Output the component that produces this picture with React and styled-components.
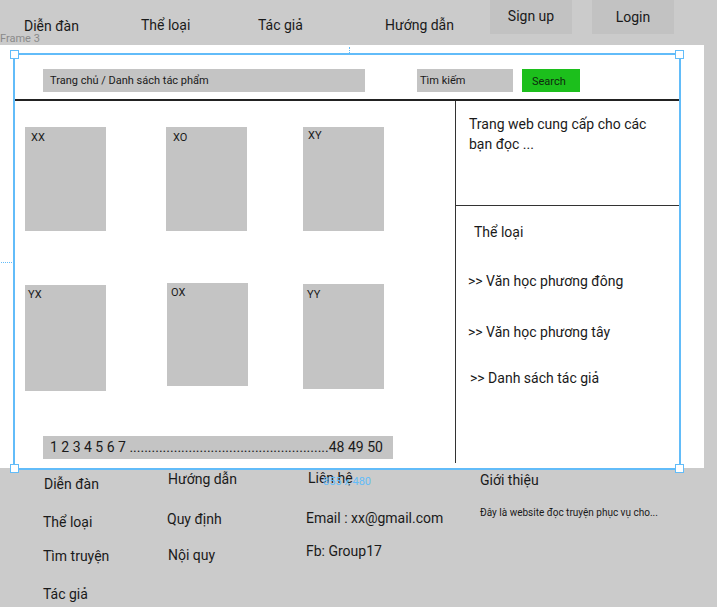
import React from 'react';
import styled, { createGlobalStyle } from 'styled-components';

const GlobalStyle = createGlobalStyle`
    html, body {
        margin: 0;
        padding: 0;
        background: #cbcbcb;
        font-family: Roboto, "Noto Sans", sans-serif;
        color: #1a1a1a;
    }
`;

const Page = styled.div`
    width: 717px;
    height: 607px;
    overflow: hidden;
    position: relative;
`;

// Header
const Header = styled.div`
    height: 45px;
    display: grid;
    grid-template-columns: 117px 117px 127px 105px 102px 82px;
    padding-left: 24px;
    position: relative;
`;

const NavLink = styled.div`
    font-size: 14px;
    line-height: 20px;
    padding-top: ${(p) => p.$top || 15}px;
    white-space: nowrap;
`;

const NavButton = styled.div`
    width: 82px;
    height: 34px;
    background: #c2c2c2;
    font-size: 14px;
    display: flex;
    align-items: center;
    justify-content: center;
    padding-bottom: ${(p) => p.$lift || 0}px;
    box-sizing: border-box;
`;

const FrameLabel = styled.div`
    position: absolute;
    left: 0;
    top: 32px;
    font-size: 11px;
    color: #8a8a8a;
`;

// Frame
const Frame = styled.div`
    width: 704px;
    height: 423px;
    background: #fff;
    position: relative;
`;

const Content = styled.div`
    margin-left: 14px;
    width: 667px;
    padding-top: 9px;
`;

const Toolbar = styled.div`
    height: 47px;
    display: flex;
    align-items: flex-start;
    padding: 15px 0 0 29px;
    box-sizing: border-box;
    border-bottom: 2px solid #222;
`;

const Field = styled.div`
    width: ${(p) => p.$w}px;
    height: 23px;
    margin-left: ${(p) => p.$ml || 0}px;
    background: #c4c4c4;
    font-size: 11px;
    line-height: 23px;
    padding-left: ${(p) => p.$pl || 7}px;
    box-sizing: border-box;
    white-space: nowrap;
`;

const SearchButton = styled.div`
    width: 58px;
    height: 23px;
    margin-left: 9px;
    background: #1cbf1c;
    font-size: 11px;
    line-height: 26px;
    padding-left: 10px;
    box-sizing: border-box;
    color: #0e2a0e;
`;

const Main = styled.div`
    display: flex;
    height: 365px;
`;

const Listing = styled.div`
    width: 441px;
    display: flex;
    flex-direction: column;
`;

const CardGrid = styled.div`
    display: grid;
    grid-template-columns: 141px 137px 81px;
    grid-template-rows: 157px 110px;
    padding: 26px 0 0 11px;
`;

const Card = styled.div`
    width: 81px;
    height: ${(p) => p.$h}px;
    margin-top: ${(p) => p.$dy || 0}px;
    margin-left: ${(p) => p.$dx || 0}px;
    background: #c4c4c4;
    font-size: 11px;
    line-height: 14px;
    padding: ${(p) => p.$pt || 4}px 0 0 ${(p) => p.$pl || 6}px;
    box-sizing: border-box;
`;

const Pagination = styled.div`
    margin: auto 0 7px 29px;
    width: 350px;
    height: 23px;
    background: #c4c4c4;
    font-size: 14px;
    line-height: 23px;
    padding-left: 7px;
    box-sizing: border-box;
    white-space: nowrap;
    overflow: hidden;
`;

const Sidebar = styled.div`
    flex: 1;
    border-left: 1.5px solid #333;
    margin-bottom: 3px;
`;

const Intro = styled.div`
    height: 105px;
    border-bottom: 1.5px solid #333;
    padding: 13px 0 0 13px;
    box-sizing: border-box;
    font-size: 14px;
    line-height: 20px;
`;

const Categories = styled.div`
    display: flex;
    flex-direction: column;
    font-size: 14px;
    line-height: 20px;
`;

const CatItem = styled.div`
    margin-top: ${(p) => p.$mt}px;
    padding-left: ${(p) => p.$pl}px;
    white-space: nowrap;
`;

// Selection overlay (canvas annotation)
const Selection = styled.div`
    position: absolute;
    left: 13px;
    top: 8px;
    width: 668px;
    height: 417px;
    border: 2px solid #62bcf9;
    box-sizing: border-box;
    pointer-events: none;
`;

const Handle = styled.div`
    position: absolute;
    width: 7px;
    height: 7px;
    background: #fff;
    border: 1.5px solid #62bcf9;
    ${(p) => (p.$top ? 'top: -5px;' : 'bottom: -5px;')}
    ${(p) => (p.$left ? 'left: -5px;' : 'right: -5px;')}
`;

const SizeLabel = styled.div`
    position: absolute;
    top: 100%;
    left: 0;
    right: 0;
    margin-top: 7px;
    text-align: center;
    font-size: 11px;
    color: #62bcf9;
`;

const TopTick = styled.div`
    position: absolute;
    left: 334px;
    top: -8px;
    height: 6px;
    border-left: 1.5px dotted #62bcf9;
`;

const SideTick = styled.div`
    position: absolute;
    left: -14px;
    top: 207px;
    width: 13px;
    border-top: 1.5px dotted #62bcf9;
`;

// Footer
const Footer = styled.div`
    display: flex;
    height: 139px;
    padding-left: 43px;
`;

const FooterCol = styled.div`
    width: ${(p) => p.$w}px;
    flex-shrink: 0;
    display: flex;
    flex-direction: column;
    padding-top: ${(p) => p.$pt}px;
    box-sizing: border-box;
`;

const FooterLink = styled.div`
    font-size: ${(p) => p.$size || 14}px;
    line-height: 20px;
    margin-top: ${(p) => p.$mt || 0}px;
    margin-left: ${(p) => p.$ml || 0}px;
    white-space: nowrap;
`;

const dots = '.'.repeat(54);

const cards = [
    { label: 'XX', h: 104, pt: 4, pl: 6 },
    { label: 'XO', h: 104, pt: 4, pl: 7 },
    { label: 'XY', h: 104, pt: 2, pl: 5 },
    { label: 'YX', h: 106, dy: 1, pt: 3, pl: 3 },
    { label: 'OX', h: 103, dy: -1, pt: 3, pl: 4, dx: 1 },
    { label: 'YY', h: 105, pt: 4, pl: 4 },
];

function App() {
    return (
        <Page>
            <GlobalStyle />
            <Header>
                <NavLink $top={16}>Diễn đàn</NavLink>
                <NavLink>Thể loại</NavLink>
                <NavLink>Tác giả</NavLink>
                <NavLink>Hướng dẫn</NavLink>
                <NavButton $lift={2}>Sign up</NavButton>
                <NavButton>Login</NavButton>
                <FrameLabel>Frame 3</FrameLabel>
            </Header>

            <Frame>
                <Content>
                    <Toolbar>
                        <Field $w={322}>Trang chủ / Danh sách tác phẩm</Field>
                        <Field $w={96} $ml={52} $pl={3}>Tìm kiếm</Field>
                        <SearchButton>Search</SearchButton>
                    </Toolbar>
                    <Main>
                        <Listing>
                            <CardGrid>
                                {cards.map((c) => (
                                    <Card
                                        key={c.label}
                                        $h={c.h}
                                        $dy={c.dy}
                                        $dx={c.dx}
                                        $pt={c.pt}
                                        $pl={c.pl}
                                    >
                                        {c.label}
                                    </Card>
                                ))}
                            </CardGrid>
                            <Pagination>1 2 3 4 5 6 7 {dots}48 49 50</Pagination>
                        </Listing>
                        <Sidebar>
                            <Intro>
                                Trang web cung cấp cho các
                                <br />
                                bạn đọc ...
                            </Intro>
                            <Categories>
                                <CatItem $mt={16} $pl={18}>Thể loại</CatItem>
                                <CatItem $mt={29} $pl={12}>&gt;&gt; Văn học phương đông</CatItem>
                                <CatItem $mt={31} $pl={12}>&gt;&gt; Văn học phương tây</CatItem>
                                <CatItem $mt={26} $pl={14}>&gt;&gt; Danh sách tác giả</CatItem>
                            </Categories>
                        </Sidebar>
                    </Main>
                </Content>

                <Selection>
                    <Handle $top $left />
                    <Handle $top />
                    <Handle $left />
                    <Handle />
                    <TopTick />
                    <SideTick />
                    <SizeLabel>855 x 480</SizeLabel>
                </Selection>
            </Frame>

            <Footer>
                <FooterCol $w={124} $pt={6}>
                    <FooterLink $ml={1}>Diễn đàn</FooterLink>
                    <FooterLink $mt={18}>Thể loại</FooterLink>
                    <FooterLink $mt={14}>Tìm truyện</FooterLink>
                    <FooterLink $mt={18}>Tác giả</FooterLink>
                </FooterCol>
                <FooterCol $w={139} $pt={1}>
                    <FooterLink $ml={1}>Hướng dẫn</FooterLink>
                    <FooterLink $mt={20}>Quy định</FooterLink>
                    <FooterLink $mt={16} $ml={1}>Nội quy</FooterLink>
                </FooterCol>
                <FooterCol $w={174} $pt={0}>
                    <FooterLink $ml={2}>Liên hệ</FooterLink>
                    <FooterLink $mt={20}>Email : xx@gmail.com</FooterLink>
                    <FooterLink $mt={13}>Fb: Group17</FooterLink>
                </FooterCol>
                <FooterCol $w={237} $pt={2}>
                    <FooterLink>Giới thiệu</FooterLink>
                    <FooterLink $mt={13} $size={10}>Đây là website đọc truyện phục vụ cho...</FooterLink>
                </FooterCol>
            </Footer>
        </Page>
    );
}

export default App;
